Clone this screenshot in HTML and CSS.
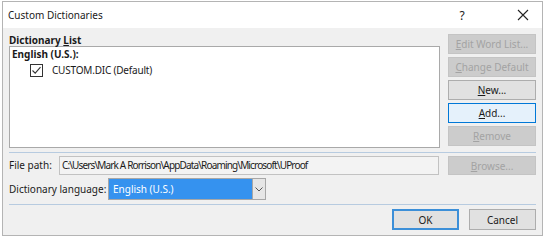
FILE: index.html
```html
<!DOCTYPE html>
<html lang="en">
<head>
  <meta charset="UTF-8">
  <title>Custom Dictionaries</title>
  <link rel="stylesheet" href="styles.css">
</head>
<body>
  <div class="dialog">
    <div class="titlebar">
      <span class="title">Custom Dictionaries</span>
      <span class="help">?</span>
      <span class="close">
        <svg width="12" height="12" viewBox="0 0 12 12"><path d="M1 1L11 11M11 1L1 11" stroke="#222" stroke-width="1.1" fill="none"/></svg>
      </span>
    </div>

    <div class="content">
      <div class="top">
        <div class="list-col">
          <div class="group-label">Dictionary <u>L</u>ist</div>
          <div class="listbox">
            <div class="lang">English (U.S.):</div>
            <div class="dict-item">
              <span class="checkbox">
                <svg width="11" height="11" viewBox="0 0 11 11"><path d="M1.5 5.5L4.2 8.2L9.5 2.2" stroke="#333" stroke-width="1.1" fill="none"/></svg>
              </span>
              CUSTOM.DIC (Default)
            </div>
          </div>
        </div>
        <div class="side-buttons">
          <button class="btn" disabled><u>E</u>dit Word List...</button>
          <button class="btn" disabled><u>C</u>hange Default</button>
          <button class="btn"><u>N</u>ew...</button>
          <button class="btn focused"><u>A</u>dd...</button>
          <button class="btn" disabled><u>R</u>emove</button>
        </div>
      </div>

      <div class="separator"></div>

      <div class="row path-row">
        <span class="label path-label">File path:</span>
        <div class="path-field">C:\Users\Mark A Rorrison\AppData\Roaming\Microsoft\UProof</div>
        <button class="btn" disabled><u>B</u>rowse...</button>
      </div>

      <div class="row lang-row">
        <span class="label lang-label">Dictionary language:</span>
        <div class="combo">
          <span class="combo-value">English (U.S.)</span>
          <span class="combo-arrow">
            <svg width="8" height="5" viewBox="0 0 8 5"><path d="M0.5 0.5L4 4L7.5 0.5" stroke="#555" stroke-width="1" fill="none"/></svg>
          </span>
        </div>
      </div>

      <div class="separator"></div>

      <div class="footer">
        <button class="btn default">OK</button>
        <button class="btn">Cancel</button>
      </div>
    </div>
  </div>
</body>
</html>
```

FILE: styles.css
```css
body {
  margin: 0;
  background: #fff;
  font-family: "Noto Sans", "Liberation Sans", sans-serif;
  font-size: 10px;
  color: #1a1a1a;
}

.dialog {
  box-sizing: border-box;
  width: 541px;
  height: 235px;
  margin: 1px 0 0 2px;
  border: 1px solid #b4b4b4;
  display: flex;
  flex-direction: column;
}

.titlebar {
  height: 26px;
  background: #fff;
  display: flex;
  align-items: center;
  padding-left: 5px;
}

.title {
  font-size: 10px;
  flex: 1;
}

.help {
  font-size: 12px;
  width: 20px;
  text-align: center;
  margin-right: 45px;
}

.close {
  width: 12px;
  height: 12px;
  margin-right: 13px;
  display: flex;
}

.content {
  flex: 1;
  background: #f0f0f0;
  padding: 6px 6px 0 6px;
}

.top {
  display: flex;
  justify-content: space-between;
}

.list-col {
  width: 431px;
}

.group-label {
  height: 12px;
  line-height: 12px;
  font-weight: bold;
}

.listbox {
  box-sizing: border-box;
  height: 102px;
  background: #fff;
  border: 1px solid #a9a9a9;
  padding-left: 2px;
}

.lang {
  height: 15px;
  line-height: 15px;
  font-weight: bold;
}

.dict-item {
  height: 16px;
  display: flex;
  align-items: center;
  letter-spacing: -0.2px;
}

.checkbox {
  box-sizing: border-box;
  width: 13px;
  height: 13px;
  border: 1px solid #333;
  margin-left: 18px;
  margin-right: 9px;
  display: flex;
  align-items: center;
  justify-content: center;
}

.side-buttons {
  width: 88px;
  display: flex;
  flex-direction: column;
  gap: 3px;
}

.btn {
  box-sizing: border-box;
  height: 20px;
  padding: 0;
  font-family: inherit;
  font-size: 10px;
  color: #1a1a1a;
  background: #e1e1e1;
  border: 1px solid #adadad;
}

.btn:disabled {
  background: #cccccc;
  border-color: #c4c4c4;
  color: #a3a3a3;
}

.btn.focused {
  background: #e5f1fb;
  border-color: #0078d7;
}

.btn.default {
  border: 2px solid #3c8fd8;
}

.separator {
  height: 1px;
  background: #b7cbe0;
  margin-top: 4px;
}

.row {
  display: flex;
  align-items: center;
}

.label {
  white-space: nowrap;
}

.path-row {
  height: 20px;
  margin-top: 2px;
}

.path-label {
  width: 50px;
}

.path-field {
  box-sizing: border-box;
  width: 381px;
  height: 19px;
  line-height: 17px;
  background: #f3f3f3;
  border: 1px solid #c2c2c2;
  padding-left: 2px;
  margin-right: 9px;
  white-space: nowrap;
  overflow: hidden;
  letter-spacing: -0.85px;
}

.path-row .btn {
  width: 88px;
  height: 19px;
  margin-top: 1px;
}

.lang-row {
  height: 22px;
  margin-top: 3px;
}

.lang-label {
  width: 99px;
}

.combo {
  box-sizing: border-box;
  width: 158px;
  height: 22px;
  border: 1px solid #a7a7a7;
  background: #e6e6e6;
  display: flex;
}

.combo-value {
  flex: 1;
  background: #3592ef;
  color: #fff;
  line-height: 20px;
  padding-left: 4px;
}

.combo-arrow {
  width: 12px;
  border-left: 1px solid #a7a7a7;
  display: flex;
  align-items: center;
  justify-content: center;
}

.footer {
  display: flex;
  justify-content: flex-end;
  gap: 10px;
  margin-top: 4px;
}

.footer .btn {
  width: 67px;
  height: 21px;
}
```
